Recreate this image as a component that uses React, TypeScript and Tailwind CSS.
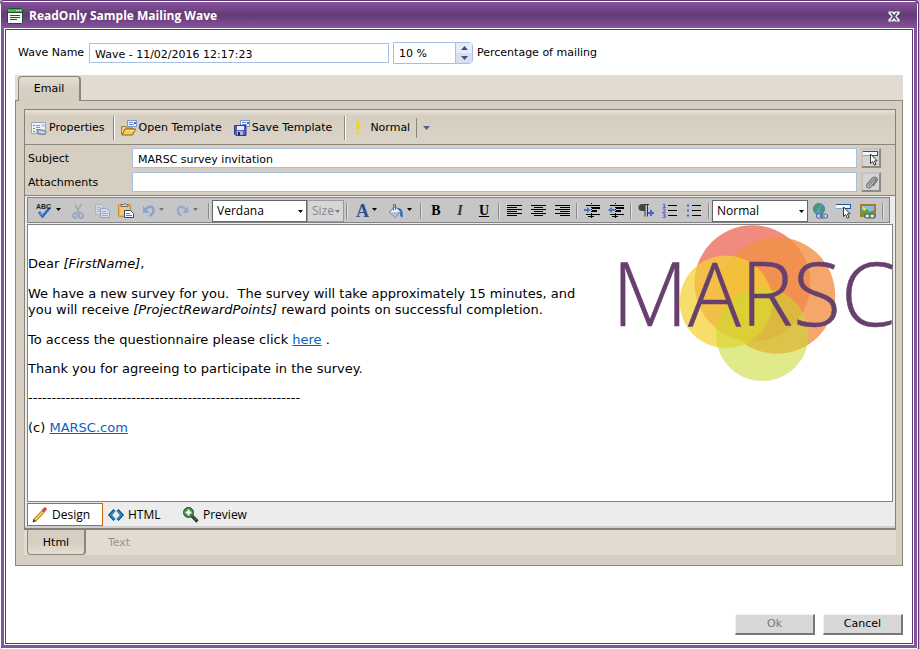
import type { ReactNode } from "react";

const verdana = "font-['Verdana','DejaVu_Sans',sans-serif]";
const segoe = "font-['Segoe_UI','Open_Sans',sans-serif]";

function Svg({ w = 16, h = 16, children }: { w?: number; h?: number; children: ReactNode }) {
  return (
    <svg width={w} height={h} viewBox={`0 0 ${w} ${h}`} className="shrink-0" aria-hidden="true">
      {children}
    </svg>
  );
}

const Caret = ({ color = "#000" }: { color?: string }) => (
  <Svg w={5} h={3}>
    <path d="M0 0h5L2.500 3z" fill={color} />
  </Svg>
);

const WindowIcon = () => (
  <Svg>
    <rect x="0.5" y="0.5" width="15" height="15" rx="1" fill="#f4fbf4" stroke="#1d4a2c" />
    <rect x="1" y="1" width="14" height="3" fill="#4fb53f" />
    <path d="M9 2.500h1M11 2.500h1M13 2.500h1" stroke="#e2f9d4" />
    <path d="M1 4.500h14" stroke="#1d4a2c" />
    <path d="M3 7.500h10M3 9.500h10M3 11.500h7" stroke="#1f5a35" />
  </Svg>
);

const PropertiesIcon = () => (
  <Svg>
    <path d="M0.500 2.500h14v9l-2 2h-12z" fill="#eef3fa" stroke="#9aa9c2" />
    <path d="M2 5.500h2M2 8.500h2M2 11.500h2" stroke="#5ea04c" />
    <path d="M5 5.500h4M5 7.500h4M5 9.500h3" stroke="#8296b8" />
    <path d="M10 4h4v3h-4z" fill="#c6d4ea" />
    <path d="M6 10.500l2-1 6 1 1 1v2l-2 1-5-.5-2-1z" fill="#a9b8d2" stroke="#53688f" strokeWidth="0.800" />
    <path d="M8 11.500l5 1" stroke="#e9eff8" />
  </Svg>
);

const CardTop = () => (
  <>
    <rect x="6.500" y="0.500" width="9" height="6" fill="#eaf1fc" stroke="#7c9ad0" />
    <path d="M8 2.500h4M8 4.500h5" stroke="#6f8fcb" />
    <path d="M13 2h2v2h-2z" fill="#466fc0" />
  </>
);

const OpenIcon = () => (
  <Svg>
    <CardTop />
    <path d="M0.500 14.500v-8h4l1 1.500h6v2" fill="#f3d27a" stroke="#a77b22" />
    <path d="M1 15l3-6h10.500l-3 6z" fill="#f8ca4c" stroke="#8d6516" />
    <path d="M5 10.500h8" stroke="#fdeaa8" />
  </Svg>
);

const SaveIcon = () => (
  <Svg>
    <CardTop />
    <path d="M0.500 5.500h11.500v10H2L0.500 14z" fill="#4b5fc0" stroke="#2c3a86" />
    <rect x="3" y="6" width="7" height="4" fill="#e8ecfa" />
    <rect x="3" y="11" width="6" height="4" fill="#aab4da" />
    <rect x="4" y="12" width="2" height="3" fill="#1c2660" />
  </Svg>
);

const CursorBoxIcon = () => (
  <Svg>
    <rect x="0" y="1" width="15" height="5" fill="#f4f6f8" />
    <path d="M0 1.500h15M14.500 1v5M9 5.500h6" fill="none" stroke="#1f568c" />
    <path d="M0 5.500h7" stroke="#8fa3b5" />
    <path d="M7.500 4v9.500l2.200-2 1.600 3.700 1.700-.8-1.600-3.500h2.800z" fill="#fff" stroke="#222" strokeWidth="0.900" />
  </Svg>
);

const ClipIcon = () => (
  <Svg w={15} h={15}>
    <path
      d="M4.500 11L10 4.500c1-1.200 2.600 0 1.600 1.300L6.500 12.200C5 14 1.300 12 3 9.500L8.500 3C10.500 .8 14.500 3.200 12.800 6L9 11"
      fill="none"
      stroke="#7a7a7a"
      strokeWidth="1.300"
    />
  </Svg>
);

const SpellIcon = () => (
  <svg width="17" height="16" viewBox="0 0 17 16" className="shrink-0" aria-hidden="true">
    <path d="M3 9l3.500 4.500L14 4.500" fill="none" stroke="#3566c4" strokeWidth="2.600" />
    <path d="M4 10l2.500 2.500" stroke="#7fa6ec" />
    <text x="0" y="6" fontSize="7" fontWeight="bold" fontFamily="Liberation Sans" fill="#222">ABC</text>
  </svg>
);

const CutIcon = () => (
  <Svg>
    <path d="M5 1l4 9M11 1L7 10" stroke="#a3a9b2" strokeWidth="1.600" />
    <ellipse cx="5" cy="12.500" rx="2" ry="2.500" fill="none" stroke="#8ea3c6" strokeWidth="1.500" />
    <ellipse cx="11" cy="12.500" rx="2" ry="2.500" fill="none" stroke="#8ea3c6" strokeWidth="1.500" />
  </Svg>
);

const CopyIcon = () => (
  <Svg>
    <path d="M1.500 1.500h6l2 2v8h-8z" fill="#cfd5df" stroke="#a6b2c6" />
    <path d="M3 4.500h4M3 6.500h4M3 8.500h4" stroke="#a9b7cd" />
    <path d="M6.500 5.500h6l3 3v6h-9z" fill="#d7dde8" stroke="#94a5c0" />
    <path d="M8 8.500h4M8 10.500h6M8 12.500h6" stroke="#9aadcb" />
  </Svg>
);

const PasteIcon = () => (
  <Svg>
    <rect x="0.500" y="1.500" width="12" height="12" rx="1" fill="#f0b455" stroke="#c98d33" />
    <rect x="2" y="4" width="9" height="8" fill="#f7c873" />
    <path d="M3 3.500h7v-2H8.500L7 .5 5.500 1.500H3z" fill="#d8d8d8" stroke="#555" strokeWidth="0.800" />
    <path d="M6.500 7.500h6l3 3v4h-9z" fill="#fff" stroke="#274a7d" />
    <path d="M8 10.500h4M8 12.500h6" stroke="#5b80b8" />
  </Svg>
);

const UndoIcon = () => (
  <Svg w={14} h={14}>
    <path d="M3 6.500C6 1.500 12 1.500 11.500 6.500 11.200 9 9.500 11 7.500 12" fill="none" stroke="#8aa2cc" strokeWidth="2.400" />
    <path d="M1 2v7h6.500z" fill="#8aa2cc" />
  </Svg>
);

const RedoIcon = () => (
  <Svg w={14} h={14}>
    <path d="M10 6.500C7.500 1.500 1.500 1.500 2 6.500 2.200 9 3.500 11 5.500 12" fill="none" stroke="#98abca" strokeWidth="2.400" />
    <path d="M12.500 2v7H6.500z" fill="#98abca" />
  </Svg>
);

const BucketIcon = () => (
  <Svg>
    <path d="M1.500 9L7 3.500l5.500 5L7 14.500z" fill="#f1f4f8" stroke="#5b6b85" />
    <path d="M2.500 9.500l9.500-1L7 14z" fill="#a9c0e6" />
    <path d="M5.500 7.500V1.500h2V7" fill="none" stroke="#5b6b85" />
    <path d="M9 5c5-.5 6.500 3.500 5.500 9.500-2.500-.5-3-3.500-2-6z" fill="#3769c4" />
  </Svg>
);

const LineIcon = ({ kind }: { kind: "left" | "center" | "right" }) => {
  const start = { left: 0, center: 3, right: 5 }[kind];
  const short = kind === "center" ? 9 : 10;
  return (
    <Svg w={15} h={12}>
      {[0, 1, 2, 3, 4, 5].map((n) => (
        <rect key={n} x={n % 2 ? start : 0} y={n * 2} width={n % 2 ? short : 15} height="1" fill="#000" />
      ))}
    </Svg>
  );
};

const IndentIcon = ({ out }: { out?: boolean }) => (
  <Svg>
    <path d="M2 2.500h14M2 11.500h14M4 13.500h6" stroke="#000" />
    <path d="M8 5h8M8 8h5" stroke="#000" strokeWidth="2" />
    <path d="M7.500 0v16" stroke="#000" strokeDasharray="1 1" />
    <path d={out ? "M0 7l4-3v2h2.500v2H4v2z" : "M6.500 7L3 4v2H0v2h3v2z"} fill="#3f74d1" />
  </Svg>
);

const ParagraphIcon = () => (
  <Svg>
    <path d="M6 1.500h5M7 1.500v12M9.500 1.500v12" stroke="#333" />
    <path d="M7 1H4a3.500 3.500 0 0 0 0 7h3z" fill="#444" />
    <path d="M13 7v6M10 10h6" stroke="#3f67cc" strokeWidth="2" />
  </Svg>
);

const NumberedIcon = () => (
  <svg width="16" height="16" viewBox="0 0 16 16" className="shrink-0" aria-hidden="true">
    <path d="M6 2.500h9M6 7.500h9M6 12.500h9" stroke="#000" />
    <g fontSize="6" fontWeight="bold" fontFamily="DejaVu Sans" fill="#3f67cc">
      <text x="0" y="5">1</text>
      <text x="0" y="10">2</text>
      <text x="0" y="15">3</text>
    </g>
  </svg>
);

const BulletIcon = () => (
  <Svg>
    <path d="M6 2.500h9M6 7.500h9M6 12.500h9" stroke="#000" />
    <path d="M1 1.500h2v2H1zM1 6.500h2v2H1zM1 11.500h2v2H1z" fill="#3f67cc" />
  </Svg>
);

const ChainLinks = () => (
  <g strokeWidth="1.200" fill="#dfe7f2">
    <rect x="4.500" y="11" width="6" height="4" rx="2" stroke="#4b6696" />
    <rect x="9.500" y="11" width="6" height="4" rx="2" stroke="#4b6696" />
    <path d="M7 13h6" stroke="#4b6696" />
  </g>
);

const GlobeIcon = () => (
  <Svg>
    <circle cx="7" cy="6" r="5.500" fill="#5b93dc" stroke="#33639f" strokeWidth="0.800" />
    <path d="M3 2.500c2-2 5-1.500 5 .5L5.500 5 4.500 8.500 2 7zM9 3l3 1v4l-3 2-1-3z" fill="#3fa247" />
    <ChainLinks />
  </Svg>
);

const ImageIcon = () => (
  <Svg>
    <rect x="1" y="2" width="14" height="11" fill="#7fc0ea" stroke="#b27722" strokeWidth="2" />
    <path d="M2 12V8l4-3 4 4 4-2v5z" fill="#4ca64a" />
    <path d="M2 3l5 3-3 2z" fill="#f5d94a" />
    <g fill="#ddd" stroke="#555" strokeWidth="1.200">
      <rect x="4.500" y="11" width="5.500" height="4" rx="2" />
      <rect x="9.500" y="11" width="5.500" height="4" rx="2" />
    </g>
  </Svg>
);

const PencilIcon = () => (
  <Svg>
    <path d="M2.500 13.500L11.500 4" stroke="#a8741a" strokeWidth="3.600" />
    <path d="M3 13L11.500 3.900" stroke="#f9d060" strokeWidth="2" />
    <path d="M10.500 4.800l1.300-1.400" stroke="#c9ccd4" strokeWidth="3.600" />
    <path d="M11.800 3.400l1.200-1.300" stroke="#d6494b" strokeWidth="3.600" strokeLinecap="round" />
    <path d="M0.500 15.500l1-3.500 2.500 2.300z" fill="#333" />
  </Svg>
);

const CodeIcon = () => (
  <Svg>
    <path d="M6.500 3L2 8l4.500 5M9.500 3L14 8l-4.500 5" fill="none" stroke="#0d4d80" strokeWidth="3" />
    <path d="M6.500 3.500L2.500 8l4 4.500M9.500 3.500l4 4.500-4 4.500" fill="none" stroke="#2f93d4" strokeWidth="1.300" />
  </Svg>
);

const PreviewIcon = () => (
  <Svg>
    <path d="M9 9l5.500 5.500" stroke="#2c2c2c" strokeWidth="3.200" />
    <path d="M9.500 9l4.500 4.500" stroke="#999" strokeWidth="0.800" />
    <circle cx="5.500" cy="5.500" r="5" fill="#3c8f45" stroke="#1c5c2a" strokeWidth="1" />
    <path d="M5.500 2.500v6M2.500 5.500h6" stroke="#fff" strokeWidth="2" />
  </Svg>
);

function Logo() {
  return (
    <svg width="274" height="157" viewBox="0 0 274 157" className="float-right overflow-visible" role="img" aria-label="MARSC">
      <circle cx="134.500" cy="58.300" r="58" fill="#f08b7e" />
      <circle cx="159" cy="70.500" r="58.200" fill="#f39147" fillOpacity="0.810" />
      <circle cx="108" cy="76.700" r="46.300" fill="#f4d234" fillOpacity="0.730" />
      <circle cx="144.300" cy="109.800" r="46.200" fill="#c9da30" fillOpacity="0.560" />
      <text x="-6" y="101" fontFamily="Open Sans" fontWeight="300" fontSize="88" fill="#67406d" stroke="#67406d" strokeWidth="0.500">MARSC</text>
    </svg>
  );
}

const Separator = () => (
  <span className="flex w-1.5 shrink-0 justify-center">
    <span className="h-4 w-0.5 border-r border-l border-r-[#dedede] border-l-[#8a8a8a]" />
  </span>
);

function ToolButton({ label, drop, off, children }: { label: string; drop?: boolean; off?: boolean; children: ReactNode }) {
  return (
    <button
      type="button"
      aria-label={label}
      disabled={off}
      className={`flex h-6 shrink-0 items-center gap-[3px] ${drop ? "w-[34px] pl-1" : "w-6 justify-center"}`}
    >
      {children}
      {drop && (
        <span className="mb-1">
          <Caret color={off ? "#777" : "#000"} />
        </span>
      )}
    </button>
  );
}

function ToolSelect({ label, options, off, className }: { label: string; options: string[]; off?: boolean; className: string }) {
  return (
    <span className={`relative shrink-0 ${className}`}>
      <select
        aria-label={label}
        disabled={off}
        className={`block h-[22px] w-full appearance-none border text-xs leading-5 ${segoe} ${
          off ? "border-[#9a9a9a] bg-[#d6d6d6] pl-1 text-[#8a8a8a]" : "border-[#666] bg-white pl-1 text-black"
        }`}
      >
        {options.map((option) => (
          <option key={option}>{option}</option>
        ))}
      </select>
      <span className="pointer-events-none absolute inset-y-0 right-1 flex items-center">
        <Caret color={off ? "#777" : "#000"} />
      </span>
    </span>
  );
}

function EditorToolbar() {
  return (
    <div role="toolbar" aria-label="Formatting" className="mr-[3px] flex h-[26px] items-center border border-[#828282] bg-[#c6c6c6] pt-0.5 pl-1">
      <ToolButton label="Spell check" drop><SpellIcon /></ToolButton>
      <ToolButton label="Cut" off><CutIcon /></ToolButton>
      <ToolButton label="Copy" off><CopyIcon /></ToolButton>
      <ToolButton label="Paste"><PasteIcon /></ToolButton>
      <ToolButton label="Undo" drop off><UndoIcon /></ToolButton>
      <ToolButton label="Redo" drop off><RedoIcon /></ToolButton>
      <Separator />
      <ToolSelect label="Font" options={["Verdana", "Arial", "Tahoma"]} className="w-[95px]" />
      <ToolSelect label="Font size" options={["Size"]} off className="w-[37px]" />
      <Separator />
      <ToolButton label="Text colour" drop>
        <span className="pl-0.5 font-['Liberation_Serif',serif] text-lg leading-none font-bold text-[#2f4f8f]">A</span>
      </ToolButton>
      <ToolButton label="Background colour" drop><BucketIcon /></ToolButton>
      <Separator />
      <ToolButton label="Bold"><span className="font-['Liberation_Serif',serif] text-sm font-bold">B</span></ToolButton>
      <ToolButton label="Italic"><span className="font-['Liberation_Serif',serif] text-sm font-bold italic text-[#333]">I</span></ToolButton>
      <ToolButton label="Underline"><span className="font-['Liberation_Serif',serif] text-sm font-bold underline">U</span></ToolButton>
      <Separator />
      <ToolButton label="Align left"><LineIcon kind="left" /></ToolButton>
      <ToolButton label="Align centre"><LineIcon kind="center" /></ToolButton>
      <ToolButton label="Align right"><LineIcon kind="right" /></ToolButton>
      <Separator />
      <ToolButton label="Indent"><IndentIcon /></ToolButton>
      <ToolButton label="Outdent"><IndentIcon out /></ToolButton>
      <Separator />
      <ToolButton label="New paragraph"><ParagraphIcon /></ToolButton>
      <ToolButton label="Numbered list"><NumberedIcon /></ToolButton>
      <ToolButton label="Bullet list"><BulletIcon /></ToolButton>
      <Separator />
      <ToolSelect label="Paragraph style" options={["Normal", "Heading 1", "Heading 2"]} className="w-24" />
      <ToolButton label="Insert link"><GlobeIcon /></ToolButton>
      <ToolButton label="Insert field"><CursorBoxIcon /></ToolButton>
      <ToolButton label="Insert image"><ImageIcon /></ToolButton>
      <Separator />
    </div>
  );
}

function Message() {
  return (
    <div className="flex-1 border border-[#828282] bg-white text-[13px] leading-4">
      <Logo />
      <div className="pt-[31px]">
        <p className="mb-3.5">Dear <em>[FirstName]</em>,</p>
        <p className="mb-3.5">
          We have a new survey for you.&nbsp; The survey will take approximately 15 minutes, and<br />
          you will receive <em>[ProjectRewardPoints]</em> reward points on successful completion.
        </p>
        <p className="mb-[13px]">
          To access the questionnaire please click <a href="#survey" className="text-[#0563c1] underline">here</a> .
        </p>
        <p className="mb-[13px]">Thank you for agreeing to participate in the survey.</p>
        <p className="mb-3.5">----------------------------------------------------------</p>
        <p>(c) <a href="#marsc" className="text-[#0563c1] underline">MARSC.com</a></p>
      </div>
    </div>
  );
}

function FieldRow({ id, label, value, action, icon }: { id: string; label: string; value: string; action: string; icon: ReactNode }) {
  return (
    <div className="flex items-center">
      <label htmlFor={id} className="w-[104px] pt-0.5">{label}</label>
      <input id={id} defaultValue={value} className="h-5 min-w-0 flex-1 border border-[#a8bfdf] bg-white px-[5px] pt-0.5" />
      <button
        type="button"
        aria-label={action}
        className="ml-1 flex h-5 w-5 items-center justify-center border-2 border-t-[#c4c4c4] border-r-[#8a8a8a] border-b-[#8a8a8a] border-l-[#c4c4c4] bg-[#d4d4d4]"
      >
        {icon}
      </button>
    </div>
  );
}

const dialogButton =
  "h-[21px] w-20 border-t border-r-2 border-b-2 border-l border-t-[#f2f2f2] border-r-[#777] border-b-[#777] border-l-[#f2f2f2] bg-[#d8d8d8] pt-px";

export default function App() {
  return (
    <div className={`flex min-h-screen bg-[#cbbcd2] pr-px text-[11px] text-black ${verdana}`}>
      <div className="flex flex-1 flex-col rounded-t bg-[#5f3870] pt-px pr-px">
        <div className="flex flex-1 flex-col rounded-t border border-white bg-[#8753a0]">
          <header className="flex h-[26px] items-center bg-linear-to-b from-[#8753a0] via-[#643a74] to-[#8753a0] pt-0.5 pr-[17px] pl-1.5">
            <WindowIcon />
            <h1 className={`flex-1 pl-1.5 text-xs font-bold text-white ${segoe}`}>ReadOnly Sample Mailing Wave</h1>
            <button type="button" aria-label="Close">
              <Svg w={12} h={11}>
                <path d="M0.500 0.500h4.500l1 1 1-1h4.500v2L8.500 5.500l3 3v2H7l-1-1-1 1H0.500v-2l3-3-3-3z" fill="#fff" />
                <path d="M2 1.500h2l2 2.500 2-2.500h2L7.300 5.500 10 9.500H8L6 7 4 9.500H2L4.700 5.500z" fill="#4e5b78" />
              </Svg>
            </button>
          </header>

          <div className="mx-[3px] mb-[3px] flex flex-1 flex-col border border-white">
            <main className="flex flex-1 flex-col border border-[#5f3870] bg-white px-[9px] pt-3 pb-2">
              {/* Wave name and percentage */}
              <div className="mb-[11px] flex h-[22px] items-center pl-[3px]">
                <label htmlFor="wave-name" className="w-[71px]">Wave Name</label>
                <input
                  id="wave-name"
                  defaultValue="Wave - 11/02/2016 12:17:23"
                  className="h-5 w-[300px] border border-[#a8bfdf] bg-white px-[5px] pt-0.5"
                />
                <div className="mx-1 flex h-[22px] w-20 rounded-r-sm border border-[#a8bfdf]">
                  <input id="percentage" defaultValue="10 %" className="min-w-0 flex-1 bg-white px-[5px] pt-0.5" />
                  <div className="flex w-[17px] flex-col border-l border-[#a8bfdf]">
                    <button type="button" aria-label="Increase" className="flex flex-1 items-center justify-center bg-[#e6edf8]">
                      <Svg w={7} h={4}><path d="M0 4h7L3.500 0z" fill="#3f4f86" /></Svg>
                    </button>
                    <button type="button" aria-label="Decrease" className="flex flex-1 items-center justify-center bg-[#d5e1f2]">
                      <Svg w={7} h={4}><path d="M0 0h7L3.500 4z" fill="#3f4f86" /></Svg>
                    </button>
                  </div>
                </div>
                <label htmlFor="percentage">Percentage of mailing</label>
              </div>

              <div role="tablist" className="flex h-[25px] items-end bg-[#e2dbd1] pl-[3px]">
                <button
                  type="button"
                  role="tab"
                  aria-selected="true"
                  className="relative -mb-px h-[25px] w-[63px] rounded-t border border-r-2 border-b-0 border-[#8c857a] bg-linear-to-b from-[#e4ded3] to-[#d6cec0] to-50%"
                >
                  Email
                </button>
              </div>

              <section className="flex flex-1 flex-col border border-[#8c857a] bg-[#d6cec0] pt-2 pr-1.5 pb-2.5 pl-2">
                <div className="flex flex-1 flex-col border border-b-2 border-[#84807a]">
                  {/* Template toolbar */}
                  <div className="flex h-[35px] items-center border-b border-[#8c857a] bg-linear-to-b from-[#e6e0d6] via-[#d6cec0] via-20% to-[#dad3c7] pt-0.5 pl-1.5">
                    <button type="button" className="flex h-6 items-center gap-0.5"><PropertiesIcon />Properties</button>
                    <span className="mr-1.5 ml-2 h-6 w-0.5 border-r border-l border-r-white border-l-[#8c857a]" />
                    <button type="button" className="flex h-6 items-center gap-0.5"><OpenIcon />Open Template</button>
                    <button type="button" className="ml-3 flex h-6 items-center gap-0.5"><SaveIcon />Save Template</button>
                    <span className="mr-1.5 ml-3 h-6 w-0.5 border-r border-l border-r-white border-l-[#8c857a]" />
                    <button type="button" className="flex h-6 items-center gap-0.5">
                      <Svg>
                        <path d="M4.500 2h3v5l-1 3h-1l-1-3z" fill="#fbd400" />
                        <circle cx="6" cy="12.500" r="1.600" fill="#fbd400" />
                      </Svg>
                      Normal
                    </button>
                    <span className="mx-1.5 h-5 w-px bg-[#8c857a]" />
                    <button type="button" aria-label="Change priority">
                      <Svg w={7} h={4}><path d="M0 0h7L3.500 4z" fill="#4a5fa8" /></Svg>
                    </button>
                  </div>

                  <div className="flex flex-col gap-1 border-b border-[#828282] py-[3px] pr-3.5 pl-[3px]">
                    <FieldRow id="subject" label="Subject" value="MARSC survey invitation" action="Insert field in subject" icon={<CursorBoxIcon />} />
                    <FieldRow id="attachments" label="Attachments" value="" action="Attach file" icon={<ClipIcon />} />
                  </div>

                  <div className="flex flex-1 flex-col border-b-2 border-[#d0d0d0] bg-[#ececec] px-0.5 pt-px">
                    <EditorToolbar />
                    <div className="mt-px flex flex-1 flex-col">
                      <Message />
                    </div>
                    <div role="tablist" className={`flex items-center pt-px text-xs ${segoe}`}>
                      <button type="button" role="tab" aria-selected="true" className="flex h-[23px] w-[76px] items-center gap-1 border border-[#c8640a] bg-white pl-1">
                        <PencilIcon />Design
                      </button>
                      <button type="button" role="tab" className="flex h-[23px] w-[76px] items-center gap-1 pl-[5px]">
                        <CodeIcon />HTML
                      </button>
                      <button type="button" role="tab" className="flex h-[23px] items-center gap-1 pl-1">
                        <PreviewIcon />Preview
                      </button>
                    </div>
                  </div>
                </div>

                <div role="tablist" className="flex h-[25px] bg-[#e2dbd1] pl-[3px]">
                  <button
                    type="button"
                    role="tab"
                    aria-selected="true"
                    className="w-[59px] rounded-b border border-t-0 border-r-2 border-[#8c857a] bg-linear-to-b from-[#d6cec0] from-50% to-[#e4ded3] pt-0.5"
                  >
                    Html
                  </button>
                  <button type="button" role="tab" disabled className="w-[66px] pt-0.5 text-[#99948b]">Text</button>
                </div>
              </section>

              <footer className="mt-12 flex justify-end gap-2">
                <button type="button" disabled className={`${dialogButton} text-[#777]`}>Ok</button>
                <button type="button" className={dialogButton}>Cancel</button>
              </footer>
            </main>
          </div>
        </div>
      </div>
    </div>
  );
}
